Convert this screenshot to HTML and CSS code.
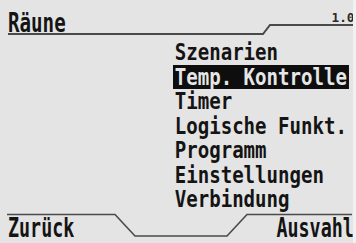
FILE: index.html
```html
<!DOCTYPE html>
<html lang="de">
<head>
<meta charset="utf-8">
<title>Räune</title>
<link rel="stylesheet" href="styles.css">
</head>
<body>
<div class="screen">
  <header class="top">
    <svg class="frame" width="356" height="40" viewBox="0 0 356 40">
      <polyline points="8,34 263,34 270,25 353,25" fill="none" stroke="#4a4a4a" stroke-width="2"/>
    </svg>
    <div class="top-row">
      <span class="title">Räune</span>
      <span class="ver">1.0</span>
    </div>
  </header>
  <ul class="menu">
    <li class="item">Szenarien</li>
    <li class="item active">Temp. Kontrolle</li>
    <li class="item">Timer</li>
    <li class="item">Logische Funkt.</li>
    <li class="item">Programm</li>
    <li class="item">Einstellungen</li>
    <li class="item">Verbindung</li>
  </ul>
  <footer class="bottom">
    <svg class="frame" width="356" height="31.5" viewBox="0 0 356 31.5">
      <polyline points="7,2.5 115,2.5 135,24 227,24 247,2.5 352,2.5" fill="none" stroke="#4a4a4a" stroke-width="1.6"/>
    </svg>
    <div class="bottom-row">
      <span class="soft left">Zurück</span>
      <span class="soft right">Ausvahl</span>
    </div>
  </footer>
</div>
</body>
</html>
```

FILE: styles.css
```css
html, body {
  margin: 0;
  padding: 0;
  background: #e5e5e5;
}

.screen {
  width: 353px;
  height: 243px;
  background: #e4e4e4;
  border-right: 3px solid #f1f1f1;
  display: flex;
  flex-direction: column;
  color: #141414;
  font-family: "DejaVu Sans Mono", monospace;
  font-weight: bold;
  overflow: hidden;
}

.top {
  height: 40px;
  display: grid;
  flex: none;
}

.top > * {
  grid-area: 1 / 1;
}

.top-row {
  display: flex;
  justify-content: space-between;
  align-items: flex-start;
  padding: 9px 2px 0 8px;
}

.title {
  display: inline-block;
  font-size: 27px;
  line-height: 27px;
  transform: scaleX(0.71);
  transform-origin: left center;
}

.ver {
  display: inline-block;
  font-size: 13px;
  line-height: 13px;
  margin-top: 2px;
  color: #2a2a2a;
  transform: scaleX(0.98);
  transform-origin: right center;
}

.menu {
  list-style: none;
  margin: 0;
  padding: 0 0 0 173px;
  height: 171.5px;
  flex: none;
  font-size: 23px;
  line-height: 24.5px;
}

.item {
  display: block;
  width: max-content;
  padding: 0 2px;
  transform: scaleX(0.83);
  transform-origin: left center;
}

.item.active {
  background: #0e0e0e;
  color: #e6e6e6;
}

.bottom {
  height: 31.5px;
  display: grid;
  flex: none;
}

.bottom > * {
  grid-area: 1 / 1;
}

.bottom-row {
  display: flex;
  justify-content: space-between;
  align-items: flex-start;
  padding: 2.6px 2px 0 8px;
}

.soft {
  display: inline-block;
  font-size: 27px;
  line-height: 27px;
  transform: scaleX(0.68);
}

.soft.left {
  transform-origin: left center;
}

.soft.right {
  transform-origin: right center;
}
```
